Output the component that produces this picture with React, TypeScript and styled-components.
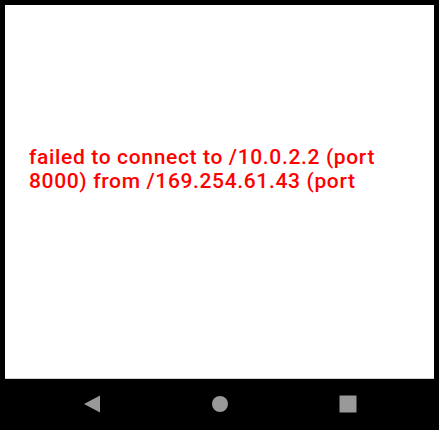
import React from "react";
import styled, { createGlobalStyle } from "styled-components";

const Global = createGlobalStyle`
  html, body { margin: 0; padding: 0; background: #000; }
  #root { width: 439px; height: 430px; }
`;

const Frame = styled.div`
  width: 439px;
  height: 430px;
  background: #000;
  display: flex;
  flex-direction: column;
  box-sizing: border-box;
  padding: 5px 5px 0 5px;
`;

const Screen = styled.div`
  flex: 0 0 374px;
  background: #fff;
  border-bottom: 1px solid #cfcfcf;
  box-sizing: border-box;
  padding: 140px 16px 0 24px;
`;

const ErrorText = styled.p`
  margin: 0;
  font-family: Roboto, "Noto Sans", sans-serif;
  font-size: 21px;
  font-weight: 500;
  letter-spacing: 0.65px;
  line-height: 24px;
  color: #ff0000;
`;

const NavBar = styled.div`
  flex: 1;
  display: flex;
  align-items: center;
  justify-content: center;
  gap: 110px;
  padding-bottom: 2px;
`;

const NavButton = styled.div`
  width: 18px;
  height: 18px;
  display: flex;
  align-items: center;
  justify-content: center;
`;

export default function App() {
  return (
    <>
      <Global />
      <Frame>
        <Screen>
          <ErrorText>
            failed to connect to /10.0.2.2 (port
            <br />
            8000) from /169.254.61.43 (port
          </ErrorText>
        </Screen>
        <NavBar>
          <NavButton>
            <svg width="18" height="18" viewBox="0 0 18 18">
              <polygon points="17,0.5 17,17.5 1,9" fill="#999" />
            </svg>
          </NavButton>
          <NavButton>
            <svg width="18" height="18" viewBox="0 0 18 18">
              <circle cx="9" cy="9" r="8" fill="#999" />
            </svg>
          </NavButton>
          <NavButton>
            <svg width="18" height="18" viewBox="0 0 18 18">
              <rect x="0.5" y="0.5" width="17" height="17" fill="#999" />
            </svg>
          </NavButton>
        </NavBar>
      </Frame>
    </>
  );
}
